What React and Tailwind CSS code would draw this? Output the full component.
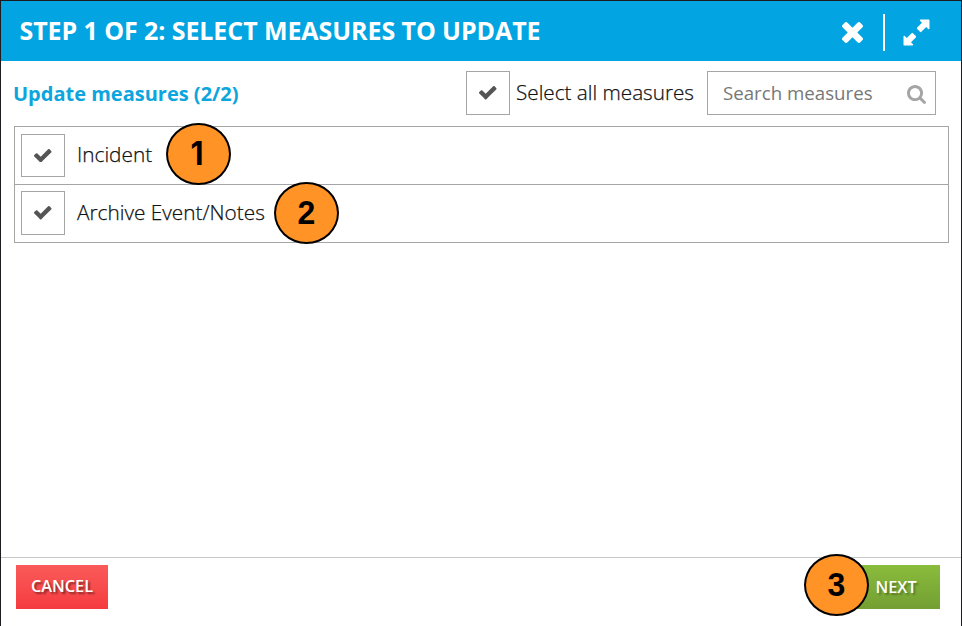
const CHECK =
  "M1671 566q0 40-28 68l-724 724-136 136q-28 28-68 28t-68-28l-136-136-362-362q-28-28-28-68t28-68l136-136q28-28 68-28t68 28l294 295 656-657q28-28 68-28t68 28l136 136q28 28 28 68z";
const TIMES =
  "M1490 1322q0 40-28 68l-136 136q-28 28-68 28t-68-28l-294-294-294 294q-28 28-68 28t-68-28l-136-136q-28-28-28-68t28-68l294-294-294-294q-28-28-28-68t28-68l136-136q28-28 68-28t68 28l294 294 294-294q28-28 68-28t68 28l136 136q28 28 28 68t-28 68l-294 294 294 294q28 28 28 68z";
const SEARCH =
  "M1216 832q0-185-131.5-316.5t-316.5-131.5-316.5 131.5-131.5 316.5 131.5 316.5 316.5 131.5 316.5-131.5 131.5-316.5zm512 832q0 52-38 90t-90 38q-54 0-90-38l-343-342q-179 124-399 124-143 0-273.5-55.5t-225-150-150-225-55.5-273.5 55.5-273.5 150-225 225-150 273.5-55.5 273.5 55.5 225 150 150 225 55.5 273.5q0 220-124 399l343 343q37 37 37 90z";

function CheckBox({ className = "h-11" }) {
  return (
    <span className={`flex w-11 shrink-0 items-center justify-center border border-[#a5a5a5] bg-white ${className}`}>
      <svg viewBox="121 334 1550 1188" className="h-[13.5px] w-[17.5px] fill-[#555]">
        <path d={CHECK} />
      </svg>
    </span>
  );
}

function Marker({ n, className }) {
  return (
    <span
      className={`absolute flex h-[62px] w-[65px] items-center justify-center rounded-[50%] border-2 border-black bg-[#ff9326] leading-none font-bold text-black ${className}`}
    >
      <span className="scale-x-[0.94]">{n}</span>
    </span>
  );
}

export default function App() {
  return (
    <div className="flex h-[626px] w-[962px] flex-col border-x border-t border-[#1c1c20] bg-white font-['Open_Sans','Noto_Sans',sans-serif] text-[#111]">
      <header className="flex h-[60px] shrink-0 items-center bg-[#02a5e1] pl-[18.5px] text-white">
        <h1 className="flex-1 pb-0.5 text-[25px] leading-[58px] font-bold tracking-[-0.08px] whitespace-nowrap">
          STEP 1 OF 2: SELECT MEASURES TO UPDATE
        </h1>
        <svg viewBox="302 366 1188 1188" className="mt-[3px] h-[21px] w-[21px] fill-white">
          <path d={TIMES} />
        </svg>
        <span className="mt-[3px] ml-5 h-[37px] w-0.5 bg-white" />
        <svg viewBox="0 0 27 27" className="mt-0.5 mr-[31px] ml-[18px] h-[27px] w-[27px] fill-white">
          <path d="M17.500 0.500h8.300q.7 0 .7.7v8.300q-.3 1.200-1.300.5l-2-2-4.800 4.800q-.7.7-1.400 0l-2.800-2.800q-.7-.7 0-1.400l4.800-4.800-2-2q-.7-1 .5-1.300z" />
          <path d="M9.500 26.500h-8.300q-.7 0-.7-.7v-8.300q.3-1.200 1.300-.5l2 2 4.800-4.800q.7-.7 1.400 0l2.800 2.800q.7.7 0 1.400l-4.800 4.800 2 2q.7 1-.5 1.300z" />
        </svg>
      </header>

      <div className="mt-2.5 flex h-11 shrink-0 items-center pr-[25px] pl-3">
        <h2 className="flex-1 pt-px text-[20px] font-bold text-[#0ca5dd]">Update measures (2/2)</h2>
        <CheckBox />
        <span className="ml-1.5 w-[191px] text-[20.7px] font-light whitespace-nowrap [-webkit-text-stroke:0.25px_#111]">
          Select all measures
        </span>
        <div className="flex h-11 w-[229px] items-center justify-between border border-[#a5a5a5] pr-[9px] pl-[15px]">
          <span className="text-[18.7px] text-[#777]">Search measures</span>
          <svg viewBox="64 128 1664 1664" className="mt-[3px] h-[19px] w-[19px] fill-[#a5a5a5]">
            <path d={SEARCH} />
          </svg>
        </div>
      </div>

      <ul className="mt-[11px] mr-3 ml-[13px] shrink-0 border border-[#a5a5a5] text-[20.8px] font-light">
        <li className="relative flex h-[58px] items-center gap-3 border-b border-[#a5a5a5] pl-1.5">
          <CheckBox className="h-[43px]" />
          <span className="mb-px [-webkit-text-stroke:0.25px_#111]">Incident</span>
          <Marker n="1" className="top-[-4px] left-[151px] pr-1 font-['Inter','Liberation_Sans',sans-serif] text-[32px]" />
        </li>
        <li className="relative flex h-[57px] items-center gap-3 pb-px pl-1.5">
          <CheckBox />
          <span className="mb-px [-webkit-text-stroke:0.25px_#111]">Archive Event/Notes</span>
          <Marker n="2" className="top-[-3px] left-[259px] pb-0.5 font-['Liberation_Sans',Arial,sans-serif] text-[34px]" />
        </li>
      </ul>

      <footer className="mt-auto flex h-[69px] shrink-0 items-start justify-between border-t border-[#c8c8c8] pt-[7px] pr-[21px] pl-[15px] text-[16.3px] font-semibold text-white">
        <button className="h-11 w-[92px] bg-linear-to-b from-[#fa5a5a] to-[#f53a3f] pb-0.5 [text-shadow:2px_2px_2px_rgba(0,0,0,0.45)]">CANCEL</button>
        <div className="relative">
          <button className="h-11 w-[88px] bg-linear-to-b from-[#8abc3c] to-[#739f33] [text-shadow:2px_2px_2px_rgba(0,0,0,0.3)]">NEXT</button>
          <Marker n="3" className="top-[-11px] left-[-48px] pb-0.5 font-['Liberation_Sans',Arial,sans-serif] text-[34px]" />
        </div>
      </footer>
    </div>
  );
}
